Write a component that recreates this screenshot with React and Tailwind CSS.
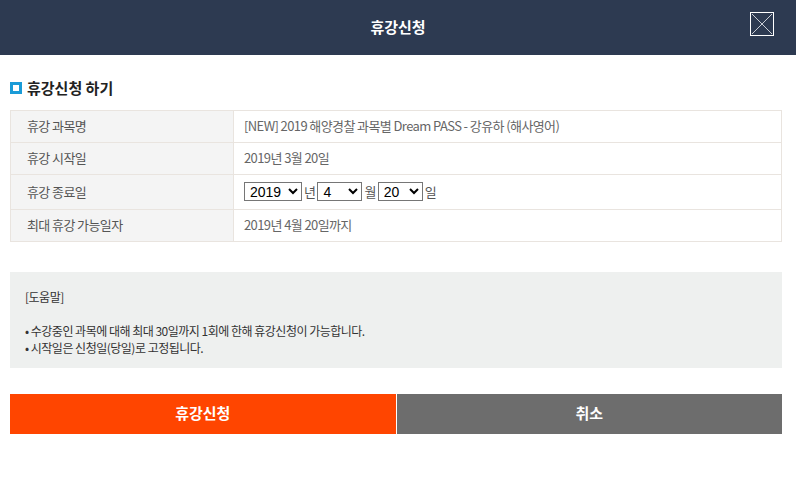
import { useState } from 'react';

const rows = [
  { label: '휴강 과목명', value: '[NEW] 2019 해양경찰 과목별 Dream PASS - 강유하 (해사영어)' },
  { label: '휴강 시작일', value: '2019년 3월 20일' },
  { label: '휴강 종료일', value: null },
  { label: '최대 휴강 가능일자', value: '2019년 4월 20일까지' },
];

function DateSelect({ value, options, onChange, width }) {
  return (
    <select
      value={value}
      onChange={(e) => onChange(e.target.value)}
      className={`h-[19px] border border-[#767676] bg-white pl-[1px] text-[14px] leading-none tracking-normal text-black ${width}`}
      style={{ fontFamily: '"Liberation Sans", Arial, sans-serif' }}
    >
      {options.map((o) => (
        <option key={o} value={o}>{o}</option>
      ))}
    </select>
  );
}

export default function App() {
  const [year, setYear] = useState('2019');
  const [month, setMonth] = useState('4');
  const [day, setDay] = useState('20');

  return (
    <div className="w-[796px] h-[484px] bg-white" style={{ fontFamily: '"Noto Sans CJK KR", "Noto Sans", sans-serif' }}>
      <header className="relative flex h-[55px] items-center justify-center bg-[#2d3a51]">
        <h1 className="text-[15px] font-bold text-white">휴강신청</h1>
        <button className="absolute right-[22px] top-[12px] h-[24px] w-[24px] border border-white">
          <svg width="22" height="22" viewBox="0 0 22 22" className="block">
            <path d="M1 1 L21 21 M21 1 L1 21" stroke="#c8ccd4" strokeWidth="1" />
          </svg>
        </button>
      </header>

      <main className="px-[10px] pr-[14px]">
        <div className="mt-[22px] flex items-center gap-[5px]">
          <span className="block h-[12px] w-[12px] border-[3px] border-[#1a9bd7] bg-white" />
          <h2 className="text-[15px] font-bold text-[#222]">휴강신청 하기</h2>
        </div>

        <table className="mt-[10px] w-full border-collapse border border-[#e9e4df] text-[13px] tracking-[-0.6px]">
          <tbody>
            {rows.map((r) => (
              <tr key={r.label} className={r.value === null ? 'h-[35px]' : 'h-[32px]'}>
                <td className="w-[223px] border border-[#e9e4df] bg-[#f4f4f4] pl-[16px] text-[#555]">{r.label}</td>
                <td className="border border-[#e9e4df] pl-[10px] text-[#666]">
                  {r.value ?? (
                    <div className="flex items-center text-[#555]">
                      <DateSelect value={year} onChange={setYear} options={['2019', '2020']} width="w-[58px]" />
                      <span className="mx-[2px]">년</span>
                      <DateSelect value={month} onChange={setMonth} options={['3', '4']} width="w-[45px]" />
                      <span className="mx-[2px]">월</span>
                      <DateSelect value={day} onChange={setDay} options={['19', '20']} width="w-[45px]" />
                      <span className="ml-[2px]">일</span>
                    </div>
                  )}
                </td>
              </tr>
            ))}
          </tbody>
        </table>

        <div className="mt-[30px] h-[96px] bg-[#eef0ef] px-[15px] pt-[16px] text-[12px] tracking-[-0.5px] text-[#333]">
          <p>[도움말]</p>
          <ul className="mt-[16px] leading-[17px]">
            <li>• 수강중인 과목에 대해 최대 30일까지 1회에 한해 휴강신청이 가능합니다.</li>
            <li>• 시작일은 신청일(당일)로 고정됩니다.</li>
          </ul>
        </div>

        <div className="mt-[26px] flex h-[40px] gap-[1px]">
          <button className="flex-1 bg-[#ff4500] text-[15px] font-bold text-white">휴강신청</button>
          <button className="flex-1 bg-[#6d6d6d] text-[15px] font-bold text-white">취소</button>
        </div>
      </main>
    </div>
  );
}
